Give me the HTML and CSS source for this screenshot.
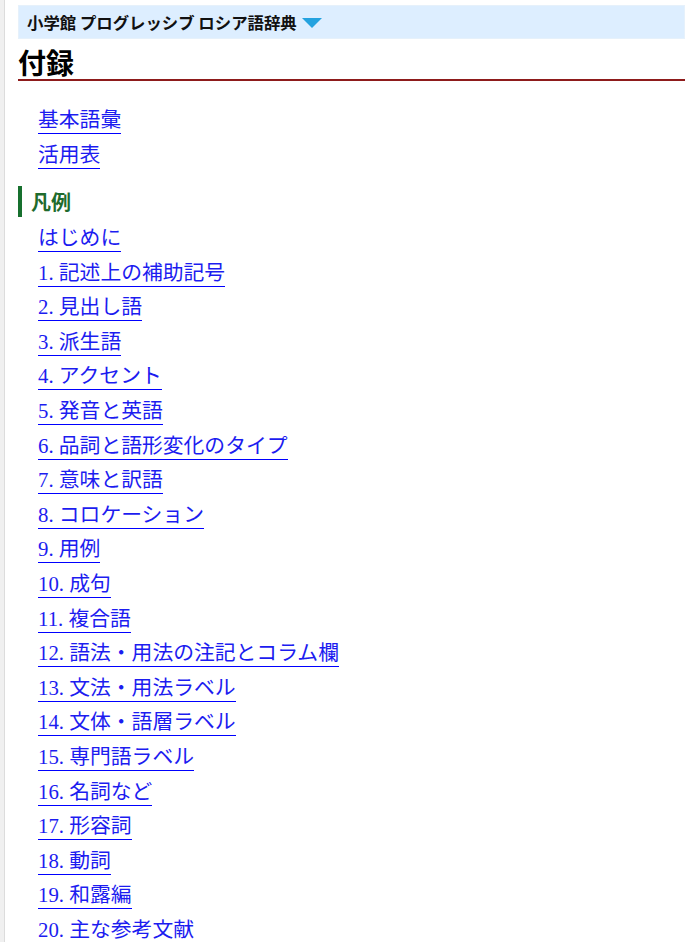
FILE: index.html
```html
<!DOCTYPE html>
<html lang="ja">
<head>
<meta charset="utf-8">
<title>付録</title>
<link rel="stylesheet" href="styles.css">
</head>
<body>
<div class="rail"></div>
<div class="page">
  <div class="dictbar">
    <span class="dictname">小学館 プログレッシブ ロシア語辞典</span>
    <span class="tri"></span>
  </div>
  <h1 class="title">付録</h1>
  <ul class="links first">
    <li><a href="#">基本語彙</a></li>
    <li><a href="#">活用表</a></li>
  </ul>
  <h2 class="section">凡例</h2>
  <ul class="links">
    <li><a href="#">はじめに</a></li>
    <li><a href="#">1. 記述上の補助記号</a></li>
    <li><a href="#">2. 見出し語</a></li>
    <li><a href="#">3. 派生語</a></li>
    <li><a href="#">4. アクセント</a></li>
    <li><a href="#">5. 発音と英語</a></li>
    <li><a href="#">6. 品詞と語形変化のタイプ</a></li>
    <li><a href="#">7. 意味と訳語</a></li>
    <li><a href="#">8. コロケーション</a></li>
    <li><a href="#">9. 用例</a></li>
    <li><a href="#">10. 成句</a></li>
    <li><a href="#">11. 複合語</a></li>
    <li><a href="#">12. 語法・用法の注記とコラム欄</a></li>
    <li><a href="#">13. 文法・用法ラベル</a></li>
    <li><a href="#">14. 文体・語層ラベル</a></li>
    <li><a href="#">15. 専門語ラベル</a></li>
    <li><a href="#">16. 名詞など</a></li>
    <li><a href="#">17. 形容詞</a></li>
    <li><a href="#">18. 動詞</a></li>
    <li><a href="#">19. 和露編</a></li>
    <li><a href="#">20. 主な参考文献</a></li>
  </ul>
</div>
</body>
</html>
```

FILE: styles.css
```css
html, body {
  margin: 0;
  padding: 0;
  background: #ffffff;
}
body {
  display: flex;
  min-height: 100vh;
  font-family: "Noto Sans CJK JP", "Noto Sans", sans-serif;
  color: #000;
}
.rail {
  flex: 0 0 4px;
  background: #f0f0f0;
  border-right: 1px solid #dcdcdc;
}
.page {
  flex: 1;
  padding: 5px 5px 0 13px;
  overflow: hidden;
}
.dictbar {
  height: 34px;
  background: #ddeeff;
  border: 1px solid #e6f1fb;
  box-sizing: border-box;
  display: flex;
  align-items: center;
  padding-left: 8px;
  gap: 5px;
}
.dictname {
  font-size: 16.4px;
  font-weight: bold;
  line-height: 20px;
  color: #111;
}
.tri {
  width: 0;
  height: 0;
  border-left: 10px solid transparent;
  border-right: 10px solid transparent;
  border-top: 10px solid #24a2df;
  margin-top: 2px;
}
.title {
  margin: 6px 0 0 0;
  font-size: 28px;
  line-height: 34px;
  font-weight: bold;
  border-bottom: 2px solid #8e1b1b;
  color: #000;
}
.links {
  list-style: none;
  margin: 0;
  padding: 0 0 0 20px;
  display: flex;
  flex-direction: column;
  align-items: flex-start;
  gap: 7.6px;
}
.links.first {
  margin-top: 26px;
  gap: 8px;
}
.links li {
  display: block;
}
.links a {
  display: block;
  font-family: "Liberation Serif", "Noto Sans CJK JP", serif;
  font-size: 20.8px;
  line-height: 26px;
  color: #1c1cf0;
  text-decoration: none;
  border-bottom: 1px solid #0000ff;
  font-variant-numeric: oldstyle-nums;
}
.section {
  margin: 17px 0 8px 0;
  font-size: 20px;
  line-height: 31px;
  font-weight: bold;
  color: #1f6b2d;
  border-left: 4px solid #17702e;
  padding-left: 9px;
}
```
